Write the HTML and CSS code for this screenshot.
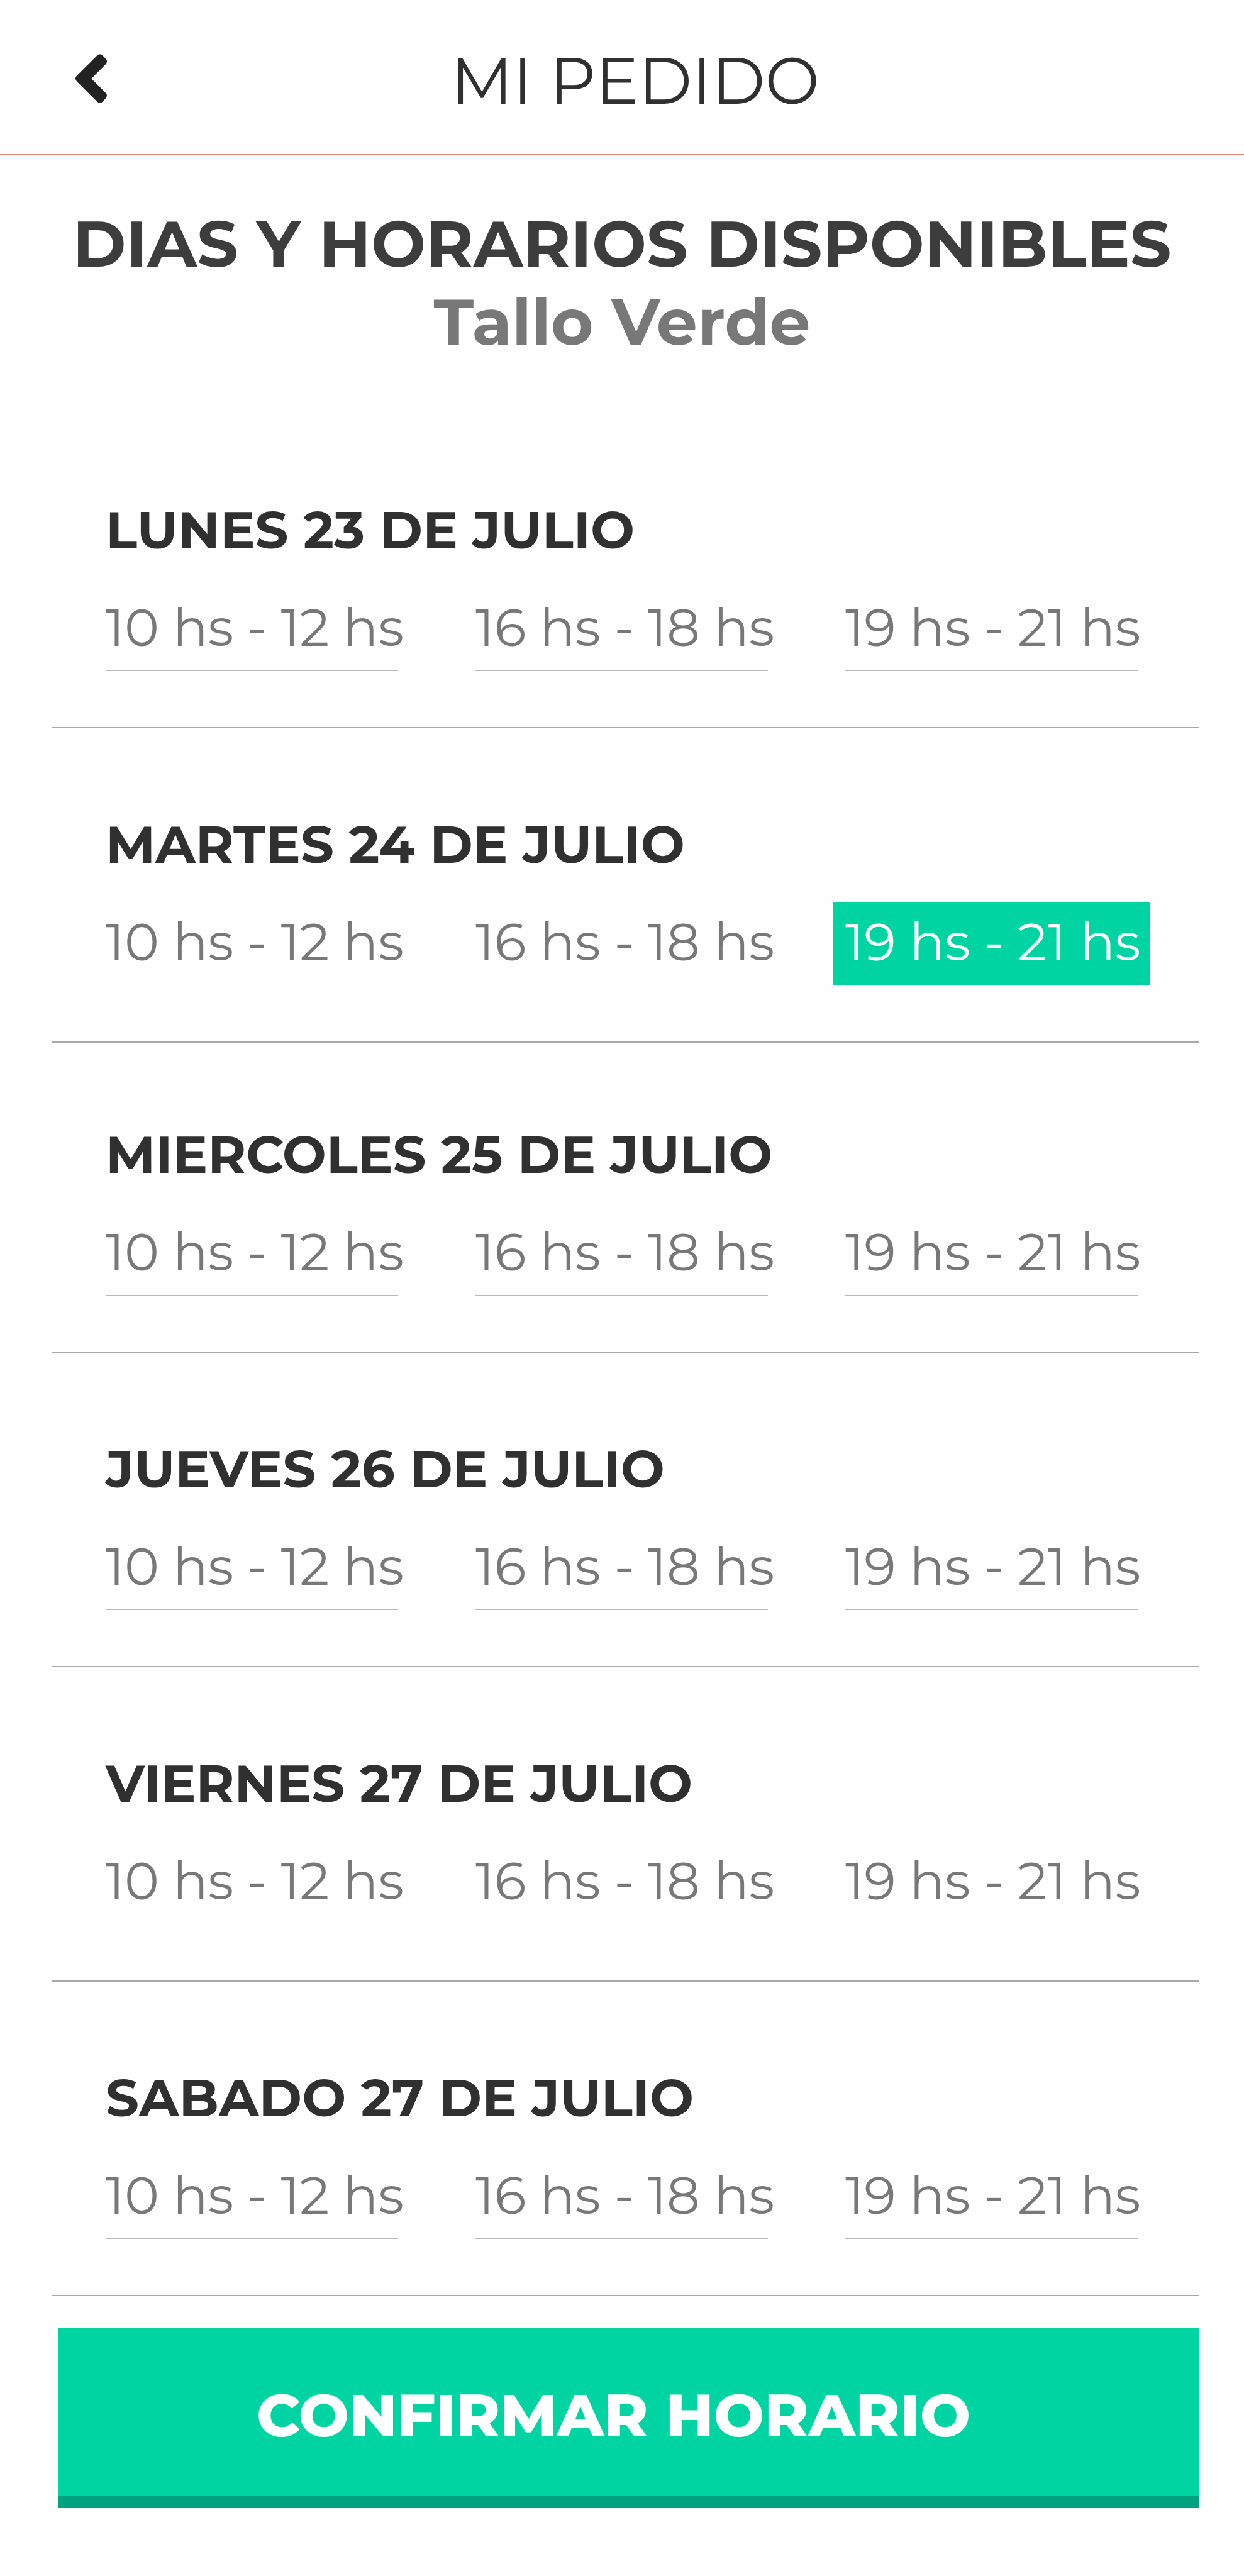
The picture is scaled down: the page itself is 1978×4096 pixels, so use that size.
FILE: index.html
```html
<!DOCTYPE html>
<html lang="es">
<head>
<meta charset="utf-8">
<meta name="viewport" content="width=device-width, initial-scale=1">
<title>Mi pedido</title>
<link rel="stylesheet" href="styles.css">
</head>
<body>
<header class="topbar">
  <button class="back" type="button" aria-label="Volver">
    <svg class="back-icon" viewBox="0 0 74 115" aria-hidden="true"><path d="M51 3q6-6 13 0l7 8q6 6 0 13L37.500 57.500 71 91q6 6 0 13l-7 8q-7 6-13 0L3 64q-6-6.500 0-13z"/></svg>
  </button>
  <h1 class="title">MI PEDIDO</h1>
</header>
<main>
  <section class="intro">
    <h2 class="heading">DIAS Y HORARIOS DISPONIBLES</h2>
    <p class="shop">Tallo Verde</p>
  </section>
  <ul class="days">
    <li class="day">
      <h3 class="date">LUNES 23 DE JULIO</h3>
      <div class="slots"><button class="slot" type="button">10 hs - 12 hs</button><button class="slot" type="button">16 hs - 18 hs</button><button class="slot" type="button">19 hs - 21 hs</button></div>
    </li>
    <li class="day">
      <h3 class="date">MARTES 24 DE JULIO</h3>
      <div class="slots"><button class="slot" type="button">10 hs - 12 hs</button><button class="slot" type="button">16 hs - 18 hs</button><button class="slot selected" type="button" aria-pressed="true">19 hs - 21 hs</button></div>
    </li>
    <li class="day compact">
      <h3 class="date">MIERCOLES 25 DE JULIO</h3>
      <div class="slots"><button class="slot" type="button">10 hs - 12 hs</button><button class="slot" type="button">16 hs - 18 hs</button><button class="slot" type="button">19 hs - 21 hs</button></div>
    </li>
    <li class="day">
      <h3 class="date">JUEVES 26 DE JULIO</h3>
      <div class="slots"><button class="slot" type="button">10 hs - 12 hs</button><button class="slot" type="button">16 hs - 18 hs</button><button class="slot" type="button">19 hs - 21 hs</button></div>
    </li>
    <li class="day">
      <h3 class="date">VIERNES 27 DE JULIO</h3>
      <div class="slots"><button class="slot" type="button">10 hs - 12 hs</button><button class="slot" type="button">16 hs - 18 hs</button><button class="slot" type="button">19 hs - 21 hs</button></div>
    </li>
    <li class="day">
      <h3 class="date">SABADO 27 DE JULIO</h3>
      <div class="slots"><button class="slot" type="button">10 hs - 12 hs</button><button class="slot" type="button">16 hs - 18 hs</button><button class="slot" type="button">19 hs - 21 hs</button></div>
    </li>
  </ul>
  <button class="confirm" type="button">CONFIRMAR HORARIO</button>
</main>
</body>
</html>
```
FILE: styles.css
```css
* {
  box-sizing: border-box;
  margin: 0;
  padding: 0;
}

body {
  background: #fefefe;
  color: #303030;
  font-family: Montserrat, Inter, sans-serif;
}

button {
  border: 0;
  background: none;
  color: inherit;
  font: inherit;
  cursor: pointer;
}

.topbar {
  display: grid;
  grid-template-columns: 176px 1fr 134px;
  align-items: center;
  padding: 66px 0 55px;
  border-bottom: 2px solid #e58377;
}

.back {
  display: flex;
  justify-content: flex-end;
  padding: 0 6px 6px 0;
}

.back-icon {
  width: 50px;
  height: 78px;
  fill: #222;
}

.title,
.heading,
.shop {
  font-size: 103px;
  line-height: 124px;
  text-align: center;
  white-space: nowrap;
}

.title {
  font-weight: 400;
}

.intro {
  padding: 78px 0 85px;
}

.heading {
  color: #3d3d3d;
  font-weight: 700;
}

.shop {
  color: #787878;
  font-weight: 700;
}

.days {
  margin: 0 71px 0 83px;
  list-style: none;
}

.day {
  padding: 135px 85px 89px;
  border-bottom: 2px solid #a8aaa9;
}

.day.compact {
  padding-top: 128px;
}

.date {
  font-size: 83px;
  font-weight: 700;
  line-height: 100px;
}

.slots {
  display: grid;
  grid-template-columns: repeat(3, 465px);
  gap: 123px;
  margin-top: 42px;
}

.slot {
  height: 132px;
  padding-bottom: 6px;
  border-bottom: 1px solid #b8bab9;
  color: #787878;
  font-size: 83px;
  line-height: 100px;
  text-align: left;
  white-space: nowrap;
}

.slot.selected {
  margin: 0 -20px;
  padding-left: 20px;
  border-bottom-color: #00d4a3;
  background: #00d4a3;
  color: #fff;
}

.confirm {
  display: block;
  width: calc(100% - 165px);
  height: 287px;
  margin: 50px 72px 0 93px;
  padding: 10px 48px 0 0;
  border-bottom: 20px solid #00a380;
  background: #00d4a3;
  color: #fff;
  font-size: 95px;
  font-weight: 800;
}
```
